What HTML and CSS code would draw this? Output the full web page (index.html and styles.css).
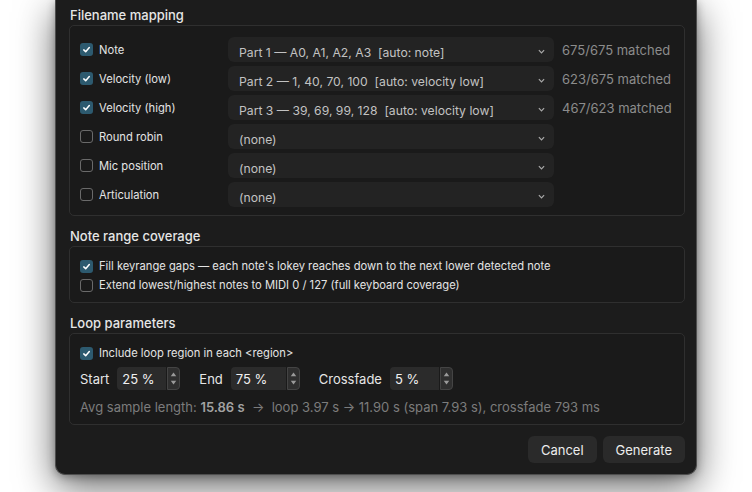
FILE: index.html
```html
<!DOCTYPE html>
<html lang="en">
<head>
    <meta charset="UTF-8">
    <meta name="viewport" content="width=device-width, initial-scale=1.0">
    <title>Generate SFZ</title>
    <link rel="stylesheet" href="styles.css">
</head>
<body>
    <div class="window">
        <h2 class="section-title">Filename mapping</h2>
        <div class="group mapping">
            <div class="map-row">
                <label class="check"><span class="box on"><svg viewBox="0 0 13 13"><path d="M3.8 6.9 L5.7 8.7 L9.3 4.6"/></svg></span>Note</label>
                <div class="select"><span>Part 1 — A0, A1, A2, A3  [auto: note]</span><svg class="chev" viewBox="0 0 8 5"><path d="M1 1 L4 4 L7 1"/></svg></div>
                <span class="count">675/675 matched</span>
            </div>
            <div class="map-row">
                <label class="check"><span class="box on"><svg viewBox="0 0 13 13"><path d="M3.8 6.9 L5.7 8.7 L9.3 4.6"/></svg></span>Velocity (low)</label>
                <div class="select"><span>Part 2 — 1, 40, 70, 100  [auto: velocity low]</span><svg class="chev" viewBox="0 0 8 5"><path d="M1 1 L4 4 L7 1"/></svg></div>
                <span class="count">623/675 matched</span>
            </div>
            <div class="map-row">
                <label class="check"><span class="box on"><svg viewBox="0 0 13 13"><path d="M3.8 6.9 L5.7 8.7 L9.3 4.6"/></svg></span>Velocity (high)</label>
                <div class="select"><span>Part 3 — 39, 69, 99, 128  [auto: velocity low]</span><svg class="chev" viewBox="0 0 8 5"><path d="M1 1 L4 4 L7 1"/></svg></div>
                <span class="count">467/623 matched</span>
            </div>
            <div class="map-row">
                <label class="check"><span class="box"></span>Round robin</label>
                <div class="select"><span>(none)</span><svg class="chev" viewBox="0 0 8 5"><path d="M1 1 L4 4 L7 1"/></svg></div>
            </div>
            <div class="map-row">
                <label class="check"><span class="box"></span>Mic position</label>
                <div class="select"><span>(none)</span><svg class="chev" viewBox="0 0 8 5"><path d="M1 1 L4 4 L7 1"/></svg></div>
            </div>
            <div class="map-row">
                <label class="check"><span class="box"></span>Articulation</label>
                <div class="select"><span>(none)</span><svg class="chev" viewBox="0 0 8 5"><path d="M1 1 L4 4 L7 1"/></svg></div>
            </div>
        </div>

        <h2 class="section-title">Note range coverage</h2>
        <div class="group coverage">
            <label class="check"><span class="box on"><svg viewBox="0 0 13 13"><path d="M3.8 6.9 L5.7 8.7 L9.3 4.6"/></svg></span>Fill keyrange gaps — each note's lokey reaches down to the next lower detected note</label>
            <label class="check"><span class="box"></span>Extend lowest/highest notes to MIDI 0 / 127 (full keyboard coverage)</label>
        </div>

        <h2 class="section-title">Loop parameters</h2>
        <div class="group loop">
            <label class="check"><span class="box on"><svg viewBox="0 0 13 13"><path d="M3.8 6.9 L5.7 8.7 L9.3 4.6"/></svg></span>Include loop region in each &lt;region&gt;</label>
            <div class="controls">
                <span class="field-label">Start</span>
                <div class="spin">
                    <span class="spin-input w-start">25 %</span>
                    <span class="spin-arrows"><svg viewBox="0 0 12 21"><path d="M6 4 L9 8 L3 8 Z"/><path d="M6 17 L9 13 L3 13 Z"/></svg></span>
                </div>
                <span class="field-label">End</span>
                <div class="spin">
                    <span class="spin-input w-end">75 %</span>
                    <span class="spin-arrows"><svg viewBox="0 0 12 21"><path d="M6 4 L9 8 L3 8 Z"/><path d="M6 17 L9 13 L3 13 Z"/></svg></span>
                </div>
                <span class="field-label">Crossfade</span>
                <div class="spin">
                    <span class="spin-input w-fade">5 %</span>
                    <span class="spin-arrows"><svg viewBox="0 0 12 21"><path d="M6 4 L9 8 L3 8 Z"/><path d="M6 17 L9 13 L3 13 Z"/></svg></span>
                </div>
            </div>
            <p class="info">Avg sample length: <b>15.86 s</b>  →  loop 3.97 s → 11.90 s (span 7.93 s), crossfade 793 ms</p>
        </div>

        <div class="footer">
            <button class="btn">Cancel</button>
            <button class="btn">Generate</button>
        </div>
    </div>
</body>
</html>
```

FILE: styles.css
```css
* {
    box-sizing: border-box;
}
body {
    margin: 0;
    min-height: 492px;
    background: #ffffff;
    font-family: Inter, "Noto Sans", sans-serif;
    color: #e4e4e4;
}
.window {
    margin-left: 55px;
    width: 642px;
    padding: 7px 11px 11px 13px;
    background: #1c1c1c;
    border: 1px solid #4e4e4e;
    border-top: none;
    border-radius: 0 0 10px 10px;
    box-shadow: 0 12px 38px rgba(0, 0, 0, 0.6), 0 2px 8px rgba(0, 0, 0, 0.3);
}
.section-title {
    margin: 12px 0 2px;
    padding-left: 1px;
    font-size: 13px;
    line-height: 16px;
    font-weight: 500;
    color: #e6e6e6;
}
.section-title:first-child {
    margin-top: 0;
}
.group {
    border: 1px solid #2f2f2f;
    border-radius: 5px;
    background: #1a1a1a;
    padding: 11px 10px 8px;
    display: flex;
    flex-direction: column;
}
.mapping {
    gap: 4px;
}
.coverage {
    gap: 3px;
    padding-bottom: 9px;
}
.map-row {
    display: flex;
    align-items: center;
    height: 25px;
}
.check {
    display: flex;
    align-items: center;
    gap: 6px;
    height: 16px;
    font-size: 11.2px;
    color: #e4e4e4;
}
.map-row .check {
    width: 148px;
    flex: none;
}
.box {
    width: 13px;
    height: 13px;
    flex: none;
    border: 1.5px solid #6a6a6a;
    border-radius: 3px;
}
.box.on {
    border: none;
    background: #2d5a6f;
}
.box svg {
    display: block;
    width: 13px;
    height: 13px;
    fill: none;
    stroke: #ffffff;
    stroke-width: 1.5;
    stroke-linecap: round;
    stroke-linejoin: round;
}
.select {
    width: 326px;
    height: 25px;
    flex: none;
    display: flex;
    align-items: center;
    justify-content: space-between;
    padding: 5px 9px 0 11px;
    background: #232323;
    border-radius: 6px;
    font-size: 12.2px;
    color: #c2c2c2;
    white-space: pre;
}
.chev {
    width: 7px;
    height: 5px;
    fill: none;
    stroke: #a8a8a8;
    stroke-width: 1.4;
    margin-top: -2px;
}
.count {
    margin-left: 8px;
    font-size: 13px;
    color: #8c8c8c;
}
.loop {
    padding-bottom: 9px;
}
.controls {
    display: flex;
    align-items: center;
    height: 23px;
    margin-top: 6px;
}
.field-label {
    margin: 0 8px 0 19px;
    font-size: 13px;
    color: #e6e6e6;
}
.field-label:first-child {
    margin-left: 0;
}
.spin {
    display: flex;
    gap: 1px;
    height: 23px;
}
.spin-input {
    display: flex;
    align-items: center;
    padding-left: 5px;
    background: #2b2b2b;
    border-radius: 4px 0 0 4px;
    font-size: 13px;
    color: #f0f0f0;
}
.w-start { width: 49px; }
.w-end { width: 55px; }
.w-fade { width: 49px; }
.spin-arrows {
    width: 13px;
    background: #2f2f2f;
    border: 1px solid #444444;
    border-radius: 0 4px 4px 0;
}
.spin-arrows svg {
    display: block;
    width: 11px;
    height: 21px;
    fill: #9a9a9a;
}
.info {
    margin: 9px 0 0;
    line-height: 16px;
    font-size: 13px;
    color: #7c7c7c;
    white-space: pre;
}
.info b {
    font-weight: 600;
    color: #a2a2a2;
}
.footer {
    display: flex;
    justify-content: flex-end;
    gap: 6px;
    margin-top: 11px;
}
.btn {
    height: 27px;
    padding: 0 13px;
    border: none;
    border-radius: 6px;
    background: #2a2a2a;
    font-family: inherit;
    font-size: 13px;
    color: #ececec;
}
```
